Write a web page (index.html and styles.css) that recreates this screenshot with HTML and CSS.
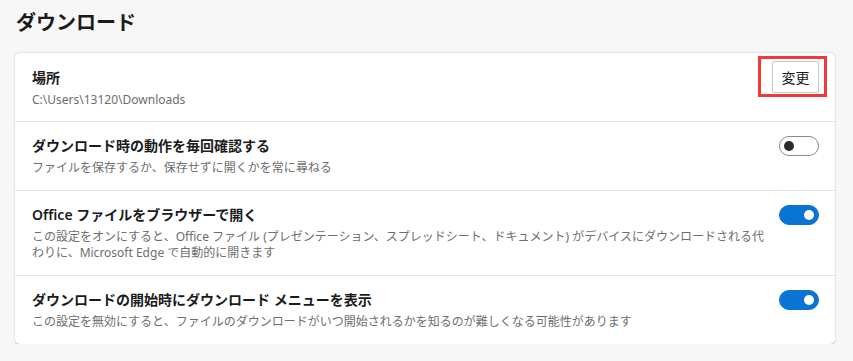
FILE: index.html
```html
<!DOCTYPE html>
<html lang="ja">
<head>
  <meta charset="UTF-8">
  <title>ダウンロード</title>
  <link rel="stylesheet" href="styles.css">
</head>
<body>
  <h1 class="page-title">ダウンロード</h1>

  <div class="card">
    <div class="row">
      <div class="row-text">
        <div class="row-title">場所</div>
        <div class="row-sub">C:\Users\13120\Downloads</div>
      </div>
      <div class="btn-wrap">
        <button class="btn">変更</button>
        <span class="mark"></span>
      </div>
    </div>

    <div class="row">
      <div class="row-text">
        <div class="row-title">ダウンロード時の動作を毎回確認する</div>
        <div class="row-sub">ファイルを保存するか、保存せずに開くかを常に尋ねる</div>
      </div>
      <span class="toggle"></span>
    </div>

    <div class="row">
      <div class="row-text">
        <div class="row-title">Office ファイルをブラウザーで開く</div>
        <div class="row-sub">この設定をオンにすると、Office ファイル (プレゼンテーション、スプレッドシート、ドキュメント) がデバイスにダウンロードされる代わりに、Microsoft Edge で自動的に開きます</div>
      </div>
      <span class="toggle on"></span>
    </div>

    <div class="row">
      <div class="row-text">
        <div class="row-title">ダウンロードの開始時にダウンロード メニューを表示</div>
        <div class="row-sub">この設定を無効にすると、ファイルのダウンロードがいつ開始されるかを知るのが難しくなる可能性があります</div>
      </div>
      <span class="toggle on"></span>
    </div>
  </div>
</body>
</html>
```

FILE: styles.css
```css
* {
  margin: 0;
  padding: 0;
  box-sizing: border-box;
}
body {
  font-family: "Noto Sans", "Noto Sans CJK JP", sans-serif;
  background-color: #f7f7f7;
  color: #1b1b1b;
  padding: 0 18px 0 15px;
}
.page-title {
  font-size: 20px;
  font-weight: 700;
  line-height: 28px;
  padding: 9px 0 16px 1px;
}
.card {
  width: 820px;
  background-color: #fff;
  border-radius: 5px;
  box-shadow: 0 0.5px 2px rgba(0, 0, 0, 0.25);
}
.row {
  display: flex;
  align-items: flex-start;
  gap: 10px;
  padding: 12px 16px 14px 17px;
  border-top: 1px solid #e6e6e6;
}
.row:first-child {
  border-top: none;
  padding-top: 13px;
  padding-bottom: 13px;
}
.row-text {
  flex: 1;
}
.row-title {
  font-size: 14px;
  font-weight: 600;
  line-height: 24px;
}
.row-sub {
  font-size: 12px;
  line-height: 16px;
  margin-top: 2px;
  color: #6e6e6e;
}
.btn-wrap {
  position: relative;
  margin-top: -5px;
}
.btn {
  display: block;
  width: 47px;
  height: 32px;
  font-family: "Noto Sans CJK JP", sans-serif;
  font-size: 14px;
  color: #1b1b1b;
  background-color: #fff;
  border: 1px solid #c8c8c8;
  border-radius: 2px;
}
.mark {
  position: absolute;
  left: -14px;
  right: -8px;
  top: -5px;
  bottom: -4px;
  border: 3px solid #f03a3a;
}
.toggle {
  position: relative;
  flex: none;
  width: 40px;
  height: 20px;
  margin-top: 2px;
  border: 1px solid #8a8a8a;
  border-radius: 10px;
  background-color: #fff;
}
.toggle::after {
  content: "";
  position: absolute;
  left: 4px;
  top: 4px;
  width: 10px;
  height: 10px;
  border-radius: 50%;
  background-color: #2b2b2b;
}
.toggle.on {
  border-color: #0a74d4;
  background-color: #0a74d4;
}
.toggle.on::after {
  left: auto;
  right: 4px;
  background-color: #fff;
}
```
